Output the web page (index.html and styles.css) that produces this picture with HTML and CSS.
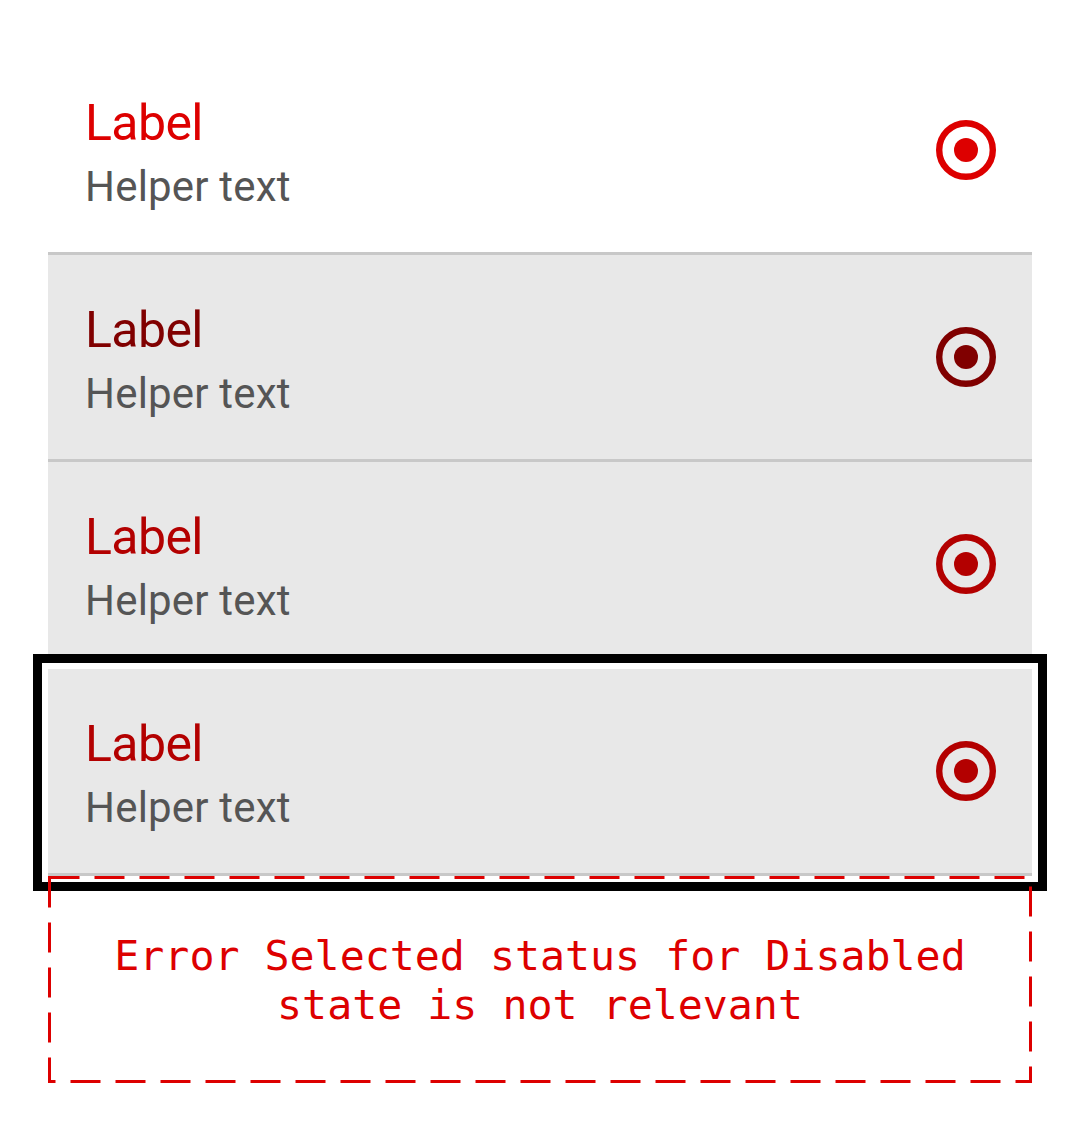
FILE: index.html
```html
<!DOCTYPE html>
<html lang="en">
<head>
<meta charset="utf-8">
<title>Radio list</title>
<link rel="stylesheet" href="styles.css">
</head>
<body>
<div class="list">
  <div class="item item-enabled">
    <div class="text">
      <div class="label">Label</div>
      <div class="helper">Helper text</div>
    </div>
    <svg class="radio" viewBox="0 0 60 60" width="60" height="60"><circle cx="30" cy="30" r="26.8" fill="none" stroke="currentColor" stroke-width="6.4"/><circle cx="30" cy="30" r="12" fill="currentColor"/></svg>
  </div>
  <div class="item item-pressed">
    <div class="text">
      <div class="label">Label</div>
      <div class="helper">Helper text</div>
    </div>
    <svg class="radio" viewBox="0 0 60 60" width="60" height="60"><circle cx="30" cy="30" r="26.8" fill="none" stroke="currentColor" stroke-width="6.4"/><circle cx="30" cy="30" r="12" fill="currentColor"/></svg>
  </div>
  <div class="item item-hover">
    <div class="text">
      <div class="label">Label</div>
      <div class="helper">Helper text</div>
    </div>
    <svg class="radio" viewBox="0 0 60 60" width="60" height="60"><circle cx="30" cy="30" r="26.8" fill="none" stroke="currentColor" stroke-width="6.4"/><circle cx="30" cy="30" r="12" fill="currentColor"/></svg>
  </div>
  <div class="item item-hover item-focus">
    <div class="text">
      <div class="label">Label</div>
      <div class="helper">Helper text</div>
    </div>
    <svg class="radio" viewBox="0 0 60 60" width="60" height="60"><circle cx="30" cy="30" r="26.8" fill="none" stroke="currentColor" stroke-width="6.4"/><circle cx="30" cy="30" r="12" fill="currentColor"/></svg>
  </div>
  <div class="error-box">
    <svg class="dash" width="984" height="207" viewBox="0 0 984 207"><rect x="1.5" y="1.5" width="981" height="204" fill="none" stroke="#dd0000" stroke-width="3" stroke-dasharray="30 15"/></svg>
    <p class="error-text">Error Selected status for Disabled state is not relevant</p>
  </div>
</div>
</body>
</html>
```
FILE: styles.css
```css
html, body {
  margin: 0;
  padding: 0;
  background: #ffffff;
}
body {
  padding: 48px;
  font-family: Roboto, "Liberation Sans", sans-serif;
}
.list {
  display: flex;
  flex-direction: column;
  width: 984px;
}
.item {
  display: flex;
  align-items: center;
  justify-content: space-between;
  height: 204px;
  border-bottom: 3px solid #c8c8c8;
  padding: 0 36px 0 37px;
  background: #ffffff;
}
.item-pressed,
.item-hover {
  background: #e8e8e8;
}
.text {
  display: flex;
  flex-direction: column;
  margin-top: 3px;
}
.label {
  font-size: 50px;
  line-height: 70px;
  letter-spacing: -0.6px;
}
.helper {
  font-size: 42px;
  line-height: 58px;
  letter-spacing: 0.2px;
  color: #555555;
}
.item-enabled .label,
.item-enabled .radio { color: #dd0000; }
.item-pressed .label,
.item-pressed .radio { color: #800000; }
.item-hover .label,
.item-hover .radio { color: #b30000; }
.radio {
  display: block;
  flex: none;
}
.item-focus {
  box-shadow: 0 0 0 6px #ffffff, 0 0 0 15px #000000;
}
.error-box {
  position: relative;
  height: 207px;
  display: flex;
  align-items: center;
  justify-content: center;
  padding: 0 40px;
}
.dash {
  position: absolute;
  left: 0;
  top: 0;
}
.error-text {
  margin: 0;
  font-family: "DejaVu Sans Mono", "Liberation Mono", monospace;
  font-size: 41.6px;
  line-height: 49px;
  color: #dd0000;
  text-align: center;
}
```
